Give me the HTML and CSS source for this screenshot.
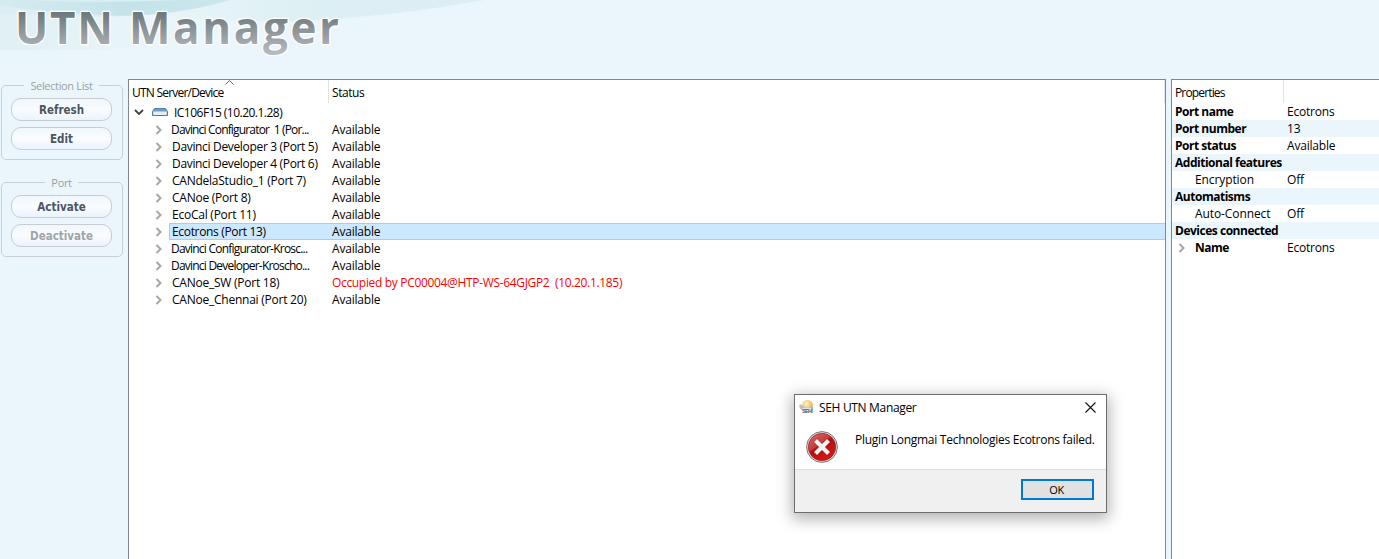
FILE: index.html
```html
<!DOCTYPE html>
<html lang="en">
<head>
<meta charset="utf-8">
<title>UTN Manager</title>
<link rel="stylesheet" href="styles.css">
</head>
<body>
<svg width="0" height="0" class="defs" aria-hidden="true">
  <symbol id="chev" viewBox="0 0 8 10"><path d="M1.5 1 5.5 5 1.5 9" fill="none" stroke="#a6a6a6" stroke-width="2"/></symbol>
</svg>
<header class="banner">
  <svg class="waves" width="700" height="79" viewBox="0 0 700 79">
    <defs>
      <linearGradient id="w1" x1="0" x2="1"><stop offset="0" stop-color="#e0f0f4"/><stop offset=".55" stop-color="#eaf6fa"/><stop offset="1" stop-color="#ebf6fc"/></linearGradient>
      <linearGradient id="w2" x1="0" x2="1"><stop offset="0" stop-color="#e8f5f9"/><stop offset=".5" stop-color="#dceff3"/><stop offset="1" stop-color="#dceef5"/></linearGradient>
      <linearGradient id="w3" x1="0" x2="1"><stop offset="0" stop-color="#d5ebf0"/><stop offset=".55" stop-color="#c4e3e9"/><stop offset="1" stop-color="#cbe7ed"/></linearGradient>
    </defs>
    <path d="M0 0H300Q260 36 180 46Q120 51 0 50Z" fill="url(#w1)"/>
    <path d="M170 0H485Q400 15 330 19Q250 25 165 16Z" fill="url(#w2)"/>
    <path d="M0 0H230Q180 15 120 16Q50 17 0 9Z" fill="url(#w3)"/>
    <path d="M0 5Q50 14 130 16Q90 18 0 14Z" fill="#deeff4"/>
    <path d="M25 0H180Q100 4 25 0Z" fill="#d9eef3"/>
  </svg>
  <svg class="logo" width="360" height="79" viewBox="0 0 360 79">
    <defs><linearGradient id="lg" gradientUnits="userSpaceOnUse" x1="0" y1="10" x2="0" y2="54"><stop offset="0" stop-color="#687478"/><stop offset="1" stop-color="#b8bcc1"/></linearGradient></defs>
    <text class="logo-text" x="15" y="43.500" textLength="98">UTN</text>
    <text class="logo-text" x="129" y="43.500" textLength="210">Manager</text>
  </svg>
</header>
<div class="main">
  <aside class="side">
    <fieldset class="group">
      <legend>Selection List</legend>
      <button>Refresh</button>
      <button>Edit</button>
    </fieldset>
    <fieldset class="group">
      <legend>Port</legend>
      <button>Activate</button>
      <button class="off">Deactivate</button>
    </fieldset>
  </aside>
  <section class="list">
    <div class="head">
      <span class="h-name"><i class="tight">UTN Server/Device</i><svg class="sort" width="9" height="5" viewBox="0 0 9 5"><path d="M.5 4.5 4.5.5 8.5 4.5" fill="none" stroke="#666"/></svg></span>
      <span class="h-status">Status</span>
    </div>
    <div class="server">
      <svg width="10" height="7" viewBox="0 0 10 7"><path d="M1 1 5 5 9 1" fill="none" stroke="#404040" stroke-width="1.8"/></svg>
      <svg class="box" width="16" height="8" viewBox="0 0 16 8"><path d="M2.5.5h11l2 3v4H.5v-4Z" fill="#6f9dc0" stroke="#4f7ea5"/><rect x="1.2" y="3.5" width="13.6" height="3.4" rx=".6" fill="#e5edf6"/></svg>
      <span class="ip">IC106F15 (10.20.1.28)</span>
    </div>
    <div class="row"><svg class="chev"><use href="#chev"/></svg><span class="name cut cut-more">Davinci Configurator&nbsp; 1 (Por...</span><span>Available</span></div>
    <div class="row"><svg class="chev"><use href="#chev"/></svg><span class="name">Davinci Developer 3 (Port 5)</span><span>Available</span></div>
    <div class="row"><svg class="chev"><use href="#chev"/></svg><span class="name">Davinci Developer 4 (Port 6)</span><span>Available</span></div>
    <div class="row"><svg class="chev"><use href="#chev"/></svg><span class="name wide">CANdelaStudio_1 (Port 7)</span><span>Available</span></div>
    <div class="row"><svg class="chev"><use href="#chev"/></svg><span class="name wide">CANoe (Port 8)</span><span>Available</span></div>
    <div class="row"><svg class="chev"><use href="#chev"/></svg><span class="name wide">EcoCal (Port 11)</span><span>Available</span></div>
    <div class="row sel"><svg class="chev"><use href="#chev"/></svg><span class="name">Ecotrons (Port 13)</span><span>Available</span></div>
    <div class="row"><svg class="chev"><use href="#chev"/></svg><span class="name cut">Davinci Configurator-Krosc...</span><span>Available</span></div>
    <div class="row"><svg class="chev"><use href="#chev"/></svg><span class="name cut">Davinci Developer-Kroscho...</span><span>Available</span></div>
    <div class="row"><svg class="chev"><use href="#chev"/></svg><span class="name wide">CANoe_SW (Port 18)</span><span class="busy">Occupied by PC00004@HTP-WS-64GJGP2&nbsp; (10.20.1.185)</span></div>
    <div class="row"><svg class="chev"><use href="#chev"/></svg><span class="name wide">CANoe_Chennai (Port 20)</span><span>Available</span></div>
  </section>
  <section class="props">
    <div class="head"><span class="p-name">Properties</span></div>
    <div class="prop"><b>Port name</b><span>Ecotrons</span></div>
    <div class="prop"><b>Port number</b><span>13</span></div>
    <div class="prop"><b>Port status</b><span>Available</span></div>
    <div class="prop"><b>Additional features</b></div>
    <div class="prop sub"><em>Encryption</em><span>Off</span></div>
    <div class="prop"><b>Automatisms</b></div>
    <div class="prop sub"><em>Auto-Connect</em><span>Off</span></div>
    <div class="prop"><b>Devices connected</b></div>
    <div class="prop sub"><svg class="chev"><use href="#chev"/></svg><b>Name</b><span>Ecotrons</span></div>
  </section>
</div>
<div class="dialog">
  <div class="title">
    <svg width="16" height="16" viewBox="0 0 16 16">
      <defs><radialGradient id="ball" cx=".4" cy=".35"><stop offset="0" stop-color="#fff2d2"/><stop offset="1" stop-color="#f0b95e"/></radialGradient></defs>
      <circle cx="8.500" cy="6.500" r="5.500" fill="url(#ball)"/><path d="M1 5q-2 4 2 6h4l-3-4Z" fill="#b9bdc0"/><path d="M3 9h10v4H5Z" fill="#d6e4ea"/><path d="M12 8h2v6h-2Z" fill="#7cc0e4"/>
      <text x="3" y="13.500" class="seh" textLength="10">SEH</text>
    </svg>
    <span>SEH UTN Manager</span>
    <svg class="close" width="11" height="11" viewBox="0 0 11 11"><path d="M.5.5l10 10M10.500.5l-10 10" stroke="#111" stroke-width="1.1"/></svg>
  </div>
  <div class="body">
    <svg width="32" height="32" viewBox="0 0 32 32">
      <defs><linearGradient id="red" x1="0" y1="0" x2=".7" y2="1"><stop offset="0" stop-color="#e06a6a"/><stop offset=".45" stop-color="#c93b3d"/><stop offset=".5" stop-color="#b01014"/><stop offset="1" stop-color="#d81a18"/></linearGradient></defs>
      <circle cx="16" cy="16" r="15.4" fill="#e3e3e3" stroke="#777"/><circle cx="16" cy="16" r="13.7" fill="url(#red)" stroke="#a31a1c" stroke-width=".7"/>
      <path d="M11 11 21 21M21 11 11 21" stroke="#8c1012" stroke-width="5.600" stroke-linecap="square" opacity=".35"/><path d="M11 11 21 21M21 11 11 21" stroke="#f5f5f5" stroke-width="4.200" stroke-linecap="square"/>
    </svg>
    <p>Plugin Longmai Technologies Ecotrons failed.</p>
  </div>
  <div class="foot"><button class="ok">OK</button></div>
</div>
</body>
</html>
```
FILE: styles.css
```css
* { box-sizing: border-box; }
body { margin: 0; width: 1379px; height: 559px; overflow: hidden; background: #ebf6fc; font: 12px/17px "Open Sans", "Noto Sans", sans-serif; color: #000; letter-spacing: -.2px; display: flex; flex-direction: column; }
i, em { font-style: normal; }
.defs { position: absolute; }
.banner { height: 79px; flex: none; display: grid; }
.banner svg { grid-area: 1 / 1; overflow: visible; }
.logo-text { font: bold 44px "Open Sans", sans-serif; fill: url(#lg); stroke: #fff; stroke-width: 2.5px; paint-order: stroke; stroke-linejoin: round; letter-spacing: 0; }
.main { flex: 1; display: flex; min-height: 0; }
.side { width: 128px; flex: none; padding-left: 1px; }
.group { width: 121px; height: 82px; margin: -1px 0 16px; padding: 5px 10px 0 9px; border: 1px solid #cbced1; border-radius: 5px; display: block; }
.group legend { margin: 0 auto; padding: 0 6px; color: #9b9fa3; font-size: 11px; line-height: 15px; letter-spacing: -.35px; }
.group button { display: block; width: 101px; height: 23px; margin: 0 0 6px; padding: 0; border: 1px solid #c9ccd0; border-radius: 10px; background: linear-gradient(#eff7fd, #fafcff 50%, #eaf3fd); font: bold 11.5px "DejaVu Sans Condensed", "DejaVu Sans", sans-serif; font-stretch: condensed; color: #4c5660; letter-spacing: 0; }
.group button.off { color: #a0a4a8; }
.list { width: 1038px; flex: none; border: 1px solid #828790; border-bottom: 0; background: #fff; }
.head { height: 23px; display: flex; line-height: 25px; }
.h-name { width: 200px; padding-left: 3px; border-right: 1px solid #e2e2e2; position: relative; }
.tight { letter-spacing: -.78px; }
.sort { position: absolute; left: 96px; top: 0; }
.h-status { padding-left: 3px; flex: 1; border-right: 1px solid #e2e2e2; letter-spacing: -.45px; }
.server { height: 18px; display: flex; align-items: center; padding-left: 5px; }
.server .box { margin-left: 8px; }
.ip { margin-left: 6px; letter-spacing: -.52px; }
.chev { width: 8px; height: 10px; flex: none; }
.row { height: 17px; line-height: 18px; display: flex; align-items: center; padding-left: 26px; }
.name { flex: none; width: 163px; margin-left: 6px; padding-left: 3px; height: 17px; white-space: pre; letter-spacing: -.33px; }
.name + span { flex: 1; height: 17px; }
.wide { letter-spacing: -.24px; }
.cut { padding-left: 2px; letter-spacing: -.78px; }
.cut-more { letter-spacing: -.83px; }
.sel .name { background: #cce8ff; box-shadow: inset 1px 1px #99d1ff, inset 0 -1px #99d1ff; }
.sel .name + span { background: #cce8ff; box-shadow: inset 0 1px #99d1ff, inset 0 -1px #99d1ff; }
.row .busy { color: #f00; letter-spacing: -.33px; }
.props { margin-left: 5px; flex: 1; border: 1px solid #828790; border-width: 1px 0 0 1px; background: #fff; }
.p-name { width: 112px; padding-left: 3px; border-right: 1px solid #e2e2e2; letter-spacing: -.85px; }
.prop { height: 17px; display: grid; grid-template-columns: 112px 1fr; align-items: center; line-height: 18px; }
.prop:nth-child(odd) { background: #ebf6fc; }
.prop b, .prop em { grid-area: 1 / 1; height: 17px; padding-left: 3px; white-space: nowrap; }
.prop b { letter-spacing: -.48px; }
.prop span { grid-area: 1 / 2; height: 17px; padding-left: 3px; }
.prop em { letter-spacing: -.1px; }
.prop.sub b, .prop.sub em { padding-left: 23px; }
.prop .chev { grid-area: 1 / 1; margin-left: 6px; }
.dialog { position: absolute; left: 794px; top: 394px; width: 313px; height: 119px; border: 1px solid #6d6d6d; background: #fff; box-shadow: 0 4px 14px 2px rgba(0,0,0,.3); display: flex; flex-direction: column; }
.title { height: 24px; display: flex; align-items: center; padding: 0 10px 0 4px; letter-spacing: -.33px; }
.title span { margin-left: 4px; }
.close { margin-left: auto; }
.seh { font: bold 5.500px "Liberation Sans", sans-serif; fill: #526371; letter-spacing: 0; }
.body { height: 50px; display: flex; padding: 12px 0 0 11px; }
.body p { margin: 0 0 0 17px; letter-spacing: -.27px; }
.foot { flex: 1; background: #f0f0f0; border-top: 1px solid #dfdfdf; display: flex; justify-content: flex-end; padding: 9px 12px 0 0; }
.ok { width: 73px; height: 21px; padding: 0 2px 0 0; border: 2px solid #0078d7; background: #e1e1e1; font: 11px/17px "Open Sans", sans-serif; color: #000; letter-spacing: -.5px; }
```
